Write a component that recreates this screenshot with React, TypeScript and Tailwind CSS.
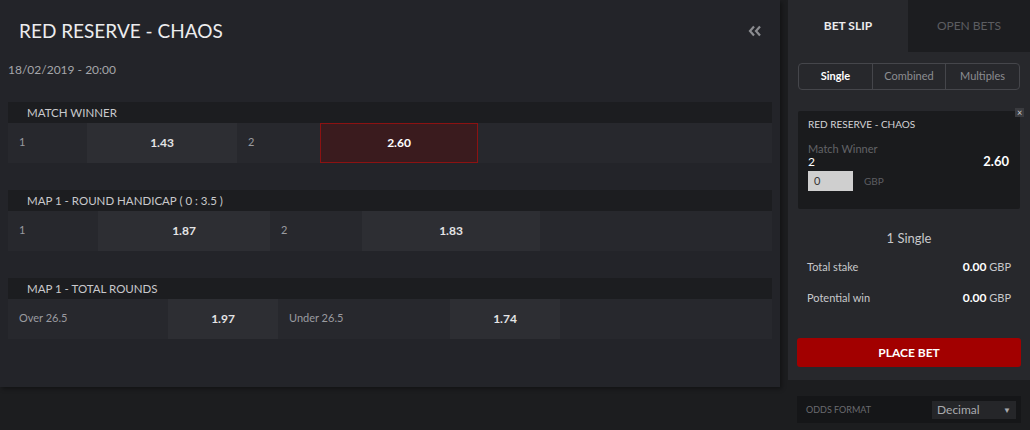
import React from 'react';

type Cell = { label: string; lw: number; odds: string; ow: number; selected?: boolean };

const markets: { title: string; cells: Cell[] }[] = [
  {
    title: 'MATCH WINNER',
    cells: [
      { label: '1', lw: 79, odds: '1.43', ow: 150 },
      { label: '2', lw: 83, odds: '2.60', ow: 158, selected: true },
    ],
  },
  {
    title: 'MAP 1 - ROUND HANDICAP ( 0 : 3.5 )',
    cells: [
      { label: '1', lw: 90, odds: '1.87', ow: 172 },
      { label: '2', lw: 92, odds: '1.83', ow: 178 },
    ],
  },
  {
    title: 'MAP 1 - TOTAL ROUNDS',
    cells: [
      { label: 'Over 26.5', lw: 160, odds: '1.97', ow: 110 },
      { label: 'Under 26.5', lw: 172, odds: '1.74', ow: 110 },
    ],
  },
];

function Market({ title, cells }: { title: string; cells: Cell[] }) {
  return (
    <div className="mx-2">
      <div className="h-[21px] bg-[#1c1d20] pl-[19px] text-[11.5px] leading-[21px] text-[#c9c9cc]">{title}</div>
      <div className="flex h-[40px] bg-[#27282d]">
        {cells.map((c, i) => (
          <React.Fragment key={i}>
            <div style={{ width: c.lw }} className="h-full pl-[11px] pt-[11px] text-[11px] text-[#9a9ba0]">
              {c.label}
            </div>
            <div
              style={{ width: c.ow }}
              className={
                c.selected
                  ? 'flex h-full items-center justify-center border border-[#8c1212] bg-[#3a1b1e] text-[12px] font-bold text-white'
                  : 'flex h-full items-center justify-center bg-[#2d2e33] text-[12px] font-bold text-[#e4e4e6]'
              }
            >
              {c.odds}
            </div>
          </React.Fragment>
        ))}
      </div>
    </div>
  );
}

export default function App() {
  return (
    <div className="flex h-[430px] w-[1030px] bg-[#1c1d1f] font-['Lato',sans-serif]">
      {/* event */}
      <div className="h-[387px] w-[780px] bg-[#232429] shadow-[2px_2px_4px_rgba(0,0,0,0.35)]">
        <div className="flex items-center justify-between pl-[19px] pr-[18px] pt-[19px]">
          <h1 className="text-[19px] leading-[24px] text-[#ececee]">RED RESERVE - CHAOS</h1>
          <svg width="14" height="12" viewBox="0 0 14 12" className="text-[#8b8c90]">
            <path d="M6 1.5 L2 6 L6 10.5" fill="none" stroke="currentColor" strokeWidth="2.2" />
            <path d="M12 1.5 L8 6 L12 10.5" fill="none" stroke="currentColor" strokeWidth="2.2" />
          </svg>
        </div>
        <div className="pl-2 pt-[19px] text-[12px] leading-[16px] text-[#a5a6aa]">18/02/2019 - 20:00</div>
        <div className="mt-[24px] flex flex-col gap-[27px]">
          {markets.map((m) => (
            <Market key={m.title} title={m.title} cells={m.cells} />
          ))}
        </div>
      </div>

      {/* bet slip */}
      <div className="ml-2 w-[242px]">
        <div className="h-[380px] bg-[#27282c]">
          <div className="flex h-[52px]">
            <div className="flex w-[120px] items-center justify-center text-[12px] font-bold text-[#ececee]">BET SLIP</div>
            <div className="flex flex-1 items-center justify-center bg-[#1c1d20] text-[12px] text-[#5c5d61]">OPEN BETS</div>
          </div>
          <div className="mx-[10px] mt-[11px] flex h-[27px] rounded-[4px] border border-[#45464b] text-[11px]">
            <div className="flex w-[74px] items-center justify-center border-r border-[#45464b] font-bold text-white">Single</div>
            <div className="flex w-[73px] items-center justify-center border-r border-[#45464b] text-[#8c8d91]">Combined</div>
            <div className="flex flex-1 items-center justify-center text-[#8c8d91]">Multiples</div>
          </div>

          <div className="relative mx-[10px] mt-[21px] h-[98px] rounded-[2px] bg-[#1a1b1d] px-[10px] pt-[7px]">
            <div className="absolute right-[-4px] top-[-3px] flex h-[9px] w-[9px] items-center justify-center bg-[#3a3b3f] text-[9px] leading-none text-[#d0d0d0]">
              ×
            </div>
            <div className="text-[10px] leading-[12px] text-[#d4d4d7]">RED RESERVE - CHAOS</div>
            <div className="mt-[12px] flex items-end justify-between">
              <div>
                <div className="text-[11px] leading-[13px] text-[#626367]">Match Winner</div>
                <div className="text-[12px] leading-[14px] text-white">2</div>
              </div>
              <div className="pr-[1px] text-[13px] font-bold leading-[16px] text-white">2.60</div>
            </div>
            <div className="mt-[2px] flex items-center">
              <div className="h-[20px] w-[45px] bg-[#cfcfcf] pl-[6px] text-[11px] leading-[20px] text-[#333]">0</div>
              <span className="ml-[11px] text-[10px] text-[#5d5e62]">GBP</span>
            </div>
          </div>

          <div className="mt-[21px] text-center text-[13px] leading-[16px] text-[#c8c8cb]">1 Single</div>
          <div className="mt-[12px] flex items-center justify-between px-[19px] text-[11px] text-[#c8c8cb]">
            <span>Total stake</span>
            <span>
              <b className="text-[12px] text-white">0.00</b> GBP
            </span>
          </div>
          <div className="mt-[13px] flex items-center justify-between px-[19px] text-[11px] text-[#c8c8cb]">
            <span>Potential win</span>
            <span>
              <b className="text-[12px] text-white">0.00</b> GBP
            </span>
          </div>
          <button className="mx-[9px] mt-[31px] flex h-[29px] w-[224px] items-center justify-center rounded-[3px] bg-[#a20000] text-[12px] font-bold text-white">
            PLACE BET
          </button>
        </div>

        <div className="mx-[9px] mt-[16px] flex h-[27px] items-center justify-between bg-[#151618] pl-[9px] pr-[5px]">
          <span className="text-[9px] text-[#6a6b6f]">ODDS FORMAT</span>
          <div className="flex h-[18px] w-[84px] items-center justify-between bg-[#252629] pl-[5px] pr-[5px] text-[12px] text-[#a9aaae]">
            <span>Decimal</span>
            <span className="text-[8px]">▼</span>
          </div>
        </div>
      </div>
    </div>
  );
}
